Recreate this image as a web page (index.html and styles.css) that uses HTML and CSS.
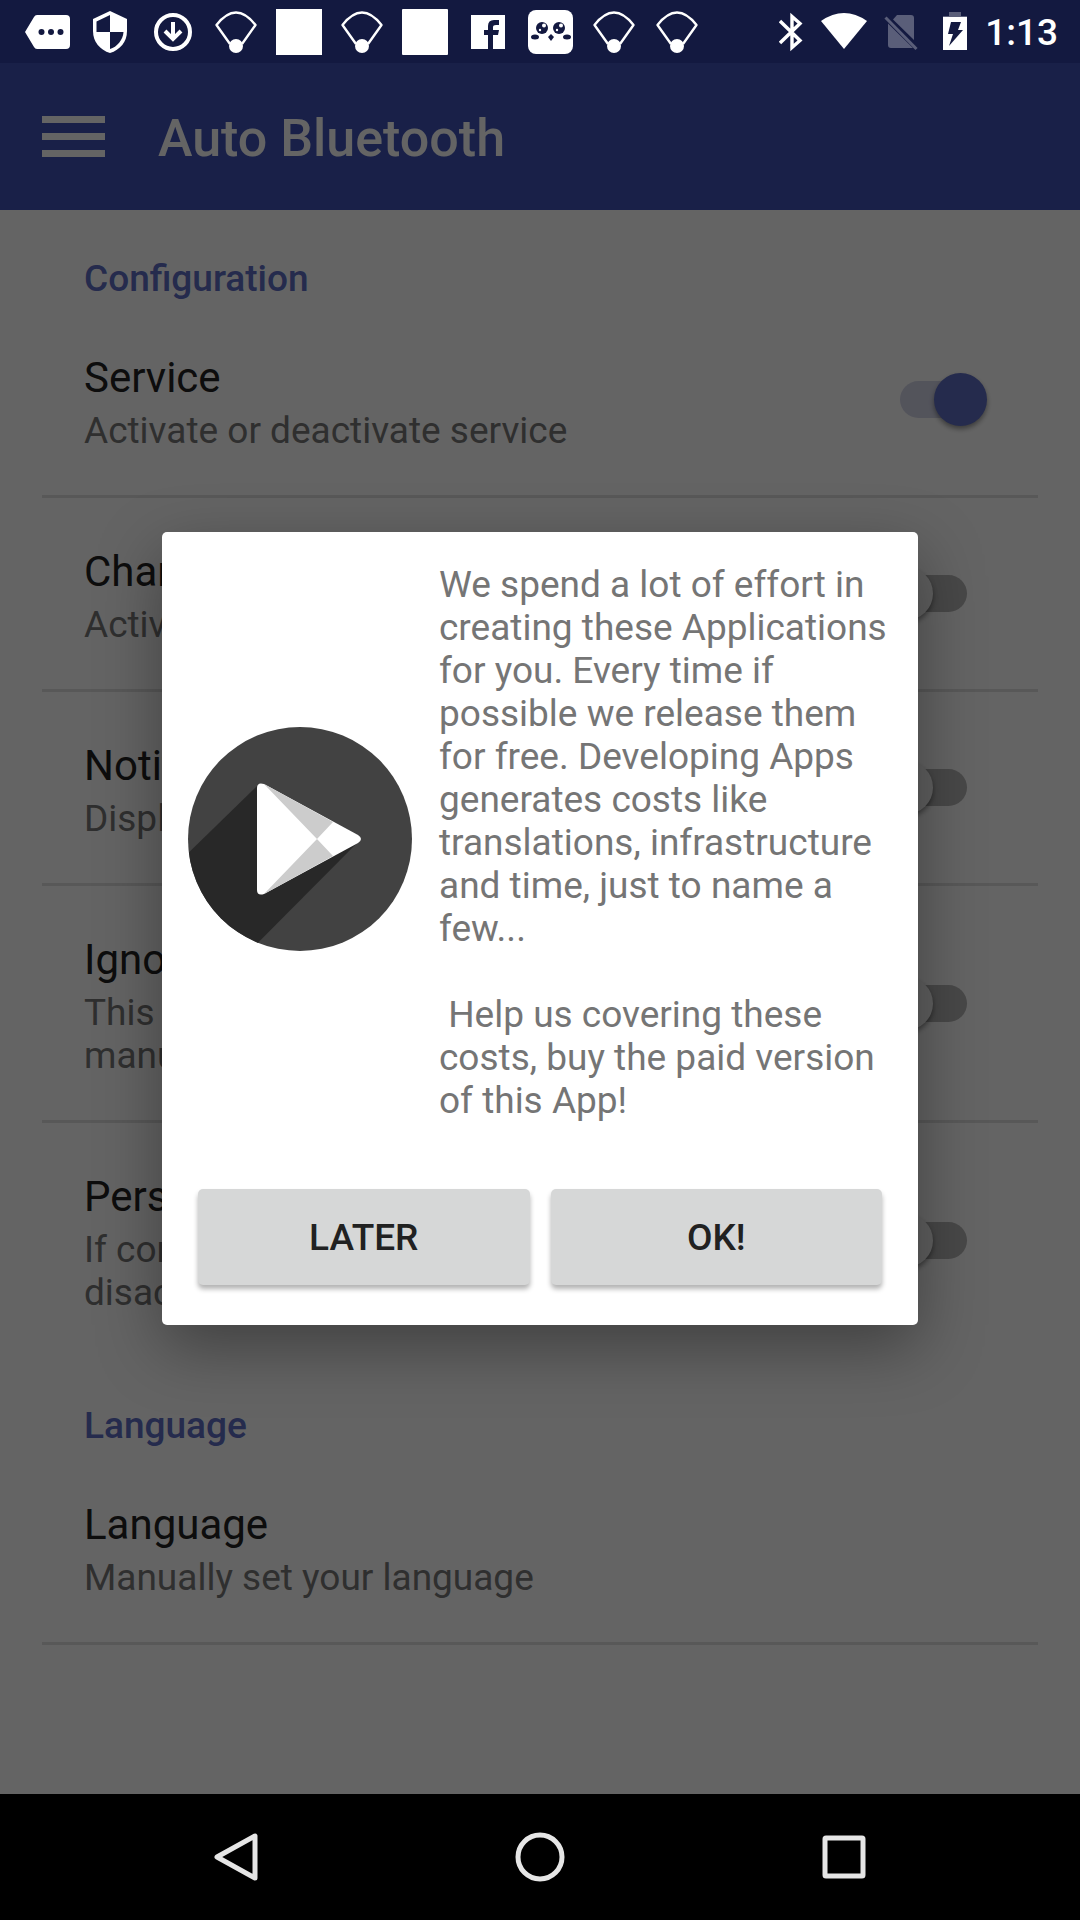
FILE: index.html
```html
<!DOCTYPE html>
<html lang="en">
<head>
<meta charset="utf-8">
<meta name="viewport" content="width=device-width, initial-scale=1">
<title>Auto Bluetooth</title>
<link rel="stylesheet" href="styles.css">
</head>
<body>
<svg class="symbols" aria-hidden="true">
  <symbol id="fan" viewBox="0 0 46 46">
    <path d="M17 35 3.500 16Q23-9 42.500 16L29 35" fill="none" stroke="#fff" stroke-width="2.400" stroke-linejoin="round"/>
    <circle cx="23" cy="37" r="7" fill="#fff"/>
  </symbol>
</svg>
<div class="screen">
  <header class="status">
    <div class="notifications">
      <svg viewBox="0 0 46 46"><path d="M13 6H42q4 0 4 4V36q0 4-4 4H13q-2 0-3-2L1 23 10 8q1-2 3-2Z" fill="#fff"/><g fill="#131940"><circle cx="17.500" cy="23" r="3"/><circle cx="27" cy="23" r="3"/><circle cx="36.500" cy="23" r="3"/></g></svg>
      <svg viewBox="0 0 46 46"><path d="M23 2 40 10V22C40 33 33 41 23 44 13 41 6 33 6 22V10Z" fill="#fff"/><path d="M23 6V23H9.500V12.500ZM23 23H36.500C36 31 30 38 23 40Z" fill="#131940"/></svg>
      <svg viewBox="0 0 46 46" fill="none" stroke="#fff" stroke-width="4"><circle cx="23" cy="23" r="17"/><path d="M23 13V30M15 22 23 30 31 22"/></svg>
      <svg><use href="#fan"/></svg>
      <svg viewBox="0 0 46 46"><path d="M0 0H46V46H0Z" fill="#fff"/></svg>
      <svg><use href="#fan"/></svg>
      <svg viewBox="0 0 46 46"><rect width="46" height="46" rx="1" fill="#fff"/></svg>
      <svg viewBox="0 0 46 46"><path d="M6 6H40V40H6Z" fill="#fff"/><path d="M23 40V26H19V21H23V17Q23 11 29 11H34V16H31Q28 16 28 18V21H34L33 26H28V40Z" fill="#131940"/></svg>
      <svg viewBox="0 0 46 46"><rect y="1" width="45" height="44" rx="8" fill="#fff"/><g fill="#131940"><circle cx="14" cy="19" r="6"/><circle cx="31" cy="19" r="6"/><ellipse cx="7" cy="28" rx="4" ry="2.500"/><ellipse cx="39" cy="28" rx="4" ry="2.500"/><path d="M23 25 26 28 23 32 20 28Z"/></g><g fill="#fff"><circle cx="16" cy="16.500" r="2"/><circle cx="12" cy="21" r="1.200"/><circle cx="33" cy="16.500" r="2"/><circle cx="29" cy="21" r="1.200"/></g></svg>
      <svg><use href="#fan"/></svg>
      <svg><use href="#fan"/></svg>
    </div>
    <div class="system">
      <svg class="bt" viewBox="0 0 24 40" fill="none" stroke="#fff" stroke-width="3.400"><path d="M1 9 21 28.500 13 35.500V4.500L21 11.500 1 31"/></svg>
      <svg class="wifi" viewBox="0 0 48 40"><path d="M1 9Q24-7 47 9L24 37Z" fill="#fff"/></svg>
      <svg class="sim" viewBox="0 0 34 40"><path d="M9 7.500 13 3H27q3 0 3 3V28ZM4 11.500 29 36q-1 0-3 0H7q-3 0-3-3Z" fill="#5a5e79"/><path d="M1.500 5.500 32.500 37" stroke="#5a5e79" stroke-width="3"/></svg>
      <svg class="battery" viewBox="0 0 26 40"><path d="M7 0H19V4H25V8H1V4H7Z" fill="#5a5e79"/><path d="M1 5H25V38H1Z" fill="#fff"/><path d="M9 10H19L16 18H21L7 34 11 22H6Z" fill="#131940"/></svg>
      <time>1:13</time>
    </div>
  </header>

  <div class="app">
    <div class="toolbar">
      <button class="menu" aria-label="Menu"><span></span><span></span><span></span></button>
      <h1>Auto Bluetooth</h1>
    </div>
    <main>
      <h2>Configuration</h2>
      <label class="row"><span class="text"><span class="title">Service</span><span class="summary">Activate or deactivate service</span></span><input type="checkbox" class="switch" checked></label>
      <label class="row"><span class="text"><span class="title">Charging</span><span class="summary">Activate while charging</span></span><input type="checkbox" class="switch"></label>
      <label class="row"><span class="text"><span class="title">Notification</span><span class="summary">Display notification</span></span><input type="checkbox" class="switch"></label>
      <label class="row"><span class="text"><span class="title">Ignore manual</span><span class="summary">This will ignore<br>manual changes</span></span><input type="checkbox" class="switch"></label>
      <label class="row last"><span class="text"><span class="title">Persistent</span><span class="summary">If connected<br>disactivate</span></span><input type="checkbox" class="switch"></label>
      <h2>Language</h2>
      <div class="row"><span class="text"><span class="title">Language</span><span class="summary">Manually set your language</span></span></div>
    </main>
  </div>

  <div class="scrim">
    <dialog open aria-label="Buy the paid version">
      <div class="message">
        <svg class="play" viewBox="0 0 224 224">
          <defs><clipPath id="disc"><circle cx="112" cy="112" r="112"/></clipPath></defs>
          <g clip-path="url(#disc)">
            <path d="M0 0H224V224H0Z" fill="#424242"/>
            <path d="M70 58-10 136V250H36L173 112Z" fill="#282828"/>
          </g>
          <path d="M69 61q0-6 7-4L170 108q6 4 0 8L76 167q-7 2-7-4Z" fill="#fff"/>
          <path d="M76 57 145 95 129 112ZM76 167 145 129 129 112Z" fill="#ccc"/>
        </svg>
        <p>We spend a lot of effort in creating these Applications for you. Every time if possible we release them for free. Developing Apps generates costs like translations, infrastructure and time, just to name a few...

 Help us covering these costs, buy the paid version of this App!</p>
      </div>
      <div class="actions">
        <button>LATER</button>
        <button>OK!</button>
      </div>
    </dialog>
  </div>

  <nav class="navbar">
    <button aria-label="Back"><svg viewBox="0 0 50 50"><path d="M44 4V46L6 25Z"/></svg></button>
    <button aria-label="Home"><svg viewBox="0 0 50 50"><circle cx="25" cy="25" r="22"/></svg></button>
    <button aria-label="Recent apps"><svg viewBox="0 0 50 50"><rect x="6" y="6" width="38" height="38" rx="1"/></svg></button>
  </nav>
</div>
</body>
</html>
```
FILE: styles.css
```css
* { box-sizing: border-box; }
body {
  margin: 0;
  font-family: Roboto, sans-serif;
  background: #fafafa;
}
h1, h2, p { margin: 0; }
button { border: 0; padding: 0; font-family: inherit; }
svg { display: block; }
.symbols { position: absolute; width: 0; height: 0; }

.screen {
  position: relative;
  display: flex;
  flex-direction: column;
  min-height: 100vh;
}

/* Status bar, drawn above the scrim */
.status {
  display: flex;
  justify-content: space-between;
  height: 63px;
  padding: 0 22px 0 24px;
  background: #131940;
}
.notifications, .system { display: flex; align-items: center; }
.notifications { gap: 17px; }
.notifications svg { width: 46px; height: 46px; }
.system svg { height: 40px; }
.bt { width: 24px; margin-right: 17px; }
.wifi { width: 48px; margin-right: 16px; }
.sim { width: 34px; margin-right: 24px; }
.battery { width: 26px; margin-right: 17px; }
.status time {
  padding-top: 2px;
  font-size: 37px;
  line-height: 43px;
  font-weight: 500;
  color: #fff;
}

.app { flex: 1; }
.toolbar {
  display: flex;
  align-items: center;
  gap: 53px;
  height: 147px;
  padding: 0 42px;
  background: #3f51b5;
}
.menu {
  display: flex;
  flex-direction: column;
  gap: 10px;
  width: 63px;
  background: none;
}
.menu span { height: 7px; background: #fafafa; }
.toolbar h1 {
  padding-top: 4px;
  font-size: 52px;
  line-height: 62px;
  font-weight: 500;
  color: #fafafa;
}

main { padding: 0 42px; }
h2 {
  padding: 47px 42px 4px;
  font-size: 37px;
  line-height: 43px;
  font-weight: 500;
  color: #5c6bc0;
}
.row {
  display: flex;
  align-items: center;
  justify-content: space-between;
  padding: 43px 51px 43px 42px;
  border-bottom: 3px solid #dcdcdc;
}
.row.last { border-bottom: 0; }
.text { display: flex; flex-direction: column; gap: 7px; padding-top: 6px; }
.title { font-size: 42px; line-height: 49px; color: #212121; }
.summary { font-size: 37px; line-height: 43px; color: #757575; }

.switch {
  appearance: none;
  position: relative;
  width: 107px;
  height: 53px;
  margin: 0;
}
.switch::before {
  content: "";
  position: absolute;
  inset: 8px 20px;
  border-radius: 19px;
  background: #b3b3b3;
}
.switch::after {
  content: "";
  position: absolute;
  top: 0;
  left: 0;
  width: 53px;
  height: 53px;
  border-radius: 50%;
  background: #f1f1f1;
  box-shadow: 0 3px 5px rgba(0, 0, 0, .4);
}
.switch:checked::before { background: #cfd1e4; }
.switch:checked::after { left: auto; right: 0; background: #5c6bc0; }

/* Dialog */
.scrim {
  position: absolute;
  inset: 63px 0 126px;
  display: flex;
  align-items: center;
  justify-content: center;
  background: rgba(0, 0, 0, .6);
}
dialog {
  position: static;
  width: 70%;
  margin: 0;
  border: 0;
  padding: 31px 26px 40px;
  border-radius: 5px;
  background: #fff;
  box-shadow: 0 22px 64px rgba(0, 0, 0, .36);
}
.message { display: flex; align-items: center; gap: 27px; }
.play { flex: none; width: 224px; height: 224px; margin-bottom: 7px; }
.message p {
  flex: 1;
  font-size: 37px;
  line-height: 43px;
  color: #757575;
  white-space: pre-wrap;
}
.actions {
  display: flex;
  gap: 21px;
  padding: 67px 10px 0;
}
.actions button {
  flex: 1;
  height: 96px;
  border-radius: 5px;
  background: #d6d7d7;
  box-shadow: 0 4px 5px rgba(0, 0, 0, .3);
  font-size: 37px;
  line-height: 43px;
  font-weight: 500;
  color: #212121;
}

.navbar {
  display: flex;
  justify-content: center;
  gap: 254px;
  height: 126px;
  background: #000;
}
.navbar button { display: flex; align-items: center; background: none; }
.navbar svg {
  width: 50px;
  height: 50px;
  fill: none;
  stroke: #e6e6e6;
  stroke-width: 5;
  stroke-linejoin: round;
}
```
